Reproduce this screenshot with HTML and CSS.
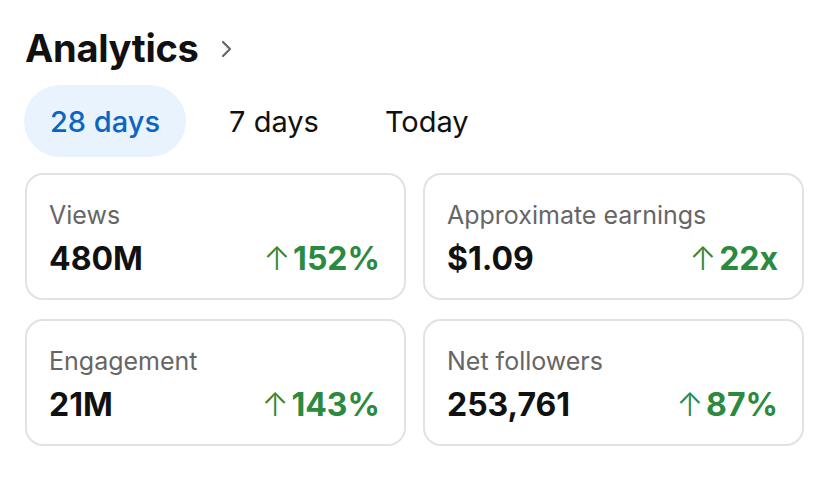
FILE: index.html
```html
<!DOCTYPE html>
<html>
<head>
<meta charset="utf-8">
<link rel="stylesheet" href="styles.css">
</head>
<body>
<div class="page">
  <div class="header">
    <h1 class="title">Analytics</h1>
    <svg class="chev" width="12" height="18" viewBox="0 0 12 18"><path d="M2 2 L9 9 L2 16" fill="none" stroke="#666" stroke-width="2.2" stroke-linecap="round" stroke-linejoin="round"/></svg>
  </div>
  <div class="tabs">
    <div class="tab active">28 days</div>
    <div class="tab">7 days</div>
    <div class="tab">Today</div>
  </div>
  <div class="grid">
    <div class="card">
      <div class="label">Views</div>
      <div class="row"><span class="value">480M</span><span class="delta"><span class="arrow">↑</span>152%</span></div>
    </div>
    <div class="card">
      <div class="label">Approximate earnings</div>
      <div class="row"><span class="value">$1.09</span><span class="delta"><span class="arrow">↑</span>22x</span></div>
    </div>
    <div class="card">
      <div class="label">Engagement</div>
      <div class="row"><span class="value">21M</span><span class="delta"><span class="arrow">↑</span>143%</span></div>
    </div>
    <div class="card">
      <div class="label">Net followers</div>
      <div class="row"><span class="value">253,761</span><span class="delta"><span class="arrow">↑</span>87%</span></div>
    </div>
  </div>
</div>
</body>
</html>
```
FILE: styles.css
```css
html, body {
  margin: 0;
  background: #ffffff;
}
body {
  font-family: Inter, "Noto Sans", "Liberation Sans", sans-serif;
  color: #111;
}
.page {
  padding: 24px 24px 0 25px;
}
.header {
  display: flex;
  align-items: center;
  gap: 23px;
  height: 48px;
}
.title {
  margin: 0;
  font-size: 38px;
  font-weight: 700;
  letter-spacing: -0.3px;
  line-height: 48px;
}
.chev {
  margin-top: 2px;
}
.tabs {
  display: flex;
  margin-top: 13px;
  margin-left: -1px;
}
.tab {
  height: 72px;
  display: flex;
  align-items: center;
  font-size: 29px;
  padding: 1px 0 0 0;
  box-sizing: border-box;
  border-radius: 36px;
  color: #111;
}
.tab.active {
  padding-left: 26px;
  padding-right: 26px;
  background: #e9f3fd;
  color: #0a66c2;
  font-weight: 500;
}
.tab:nth-child(2) {
  margin-left: 43px;
}
.tab:nth-child(3) {
  margin-left: 66px;
}
.grid {
  display: grid;
  grid-template-columns: 381px 381px;
  column-gap: 17px;
  row-gap: 19px;
  margin-top: 16px;
}
.card {
  border: 2px solid #e2e2e2;
  border-radius: 18px;
  padding: 25px 24px 0 22px;
  box-sizing: border-box;
  height: 127px;
}
.label {
  font-size: 25px;
  color: #666666;
  line-height: 30px;
}
.row {
  display: flex;
  justify-content: space-between;
  align-items: baseline;
  margin-top: 10px;
}
.value {
  font-size: 32px;
  font-weight: 700;
  line-height: 38px;
}
.delta {
  font-size: 32px;
  font-weight: 700;
  color: #2b8a3e;
  line-height: 38px;
}
.arrow {
  font-weight: 300;
  margin-right: 3px;
}
```
